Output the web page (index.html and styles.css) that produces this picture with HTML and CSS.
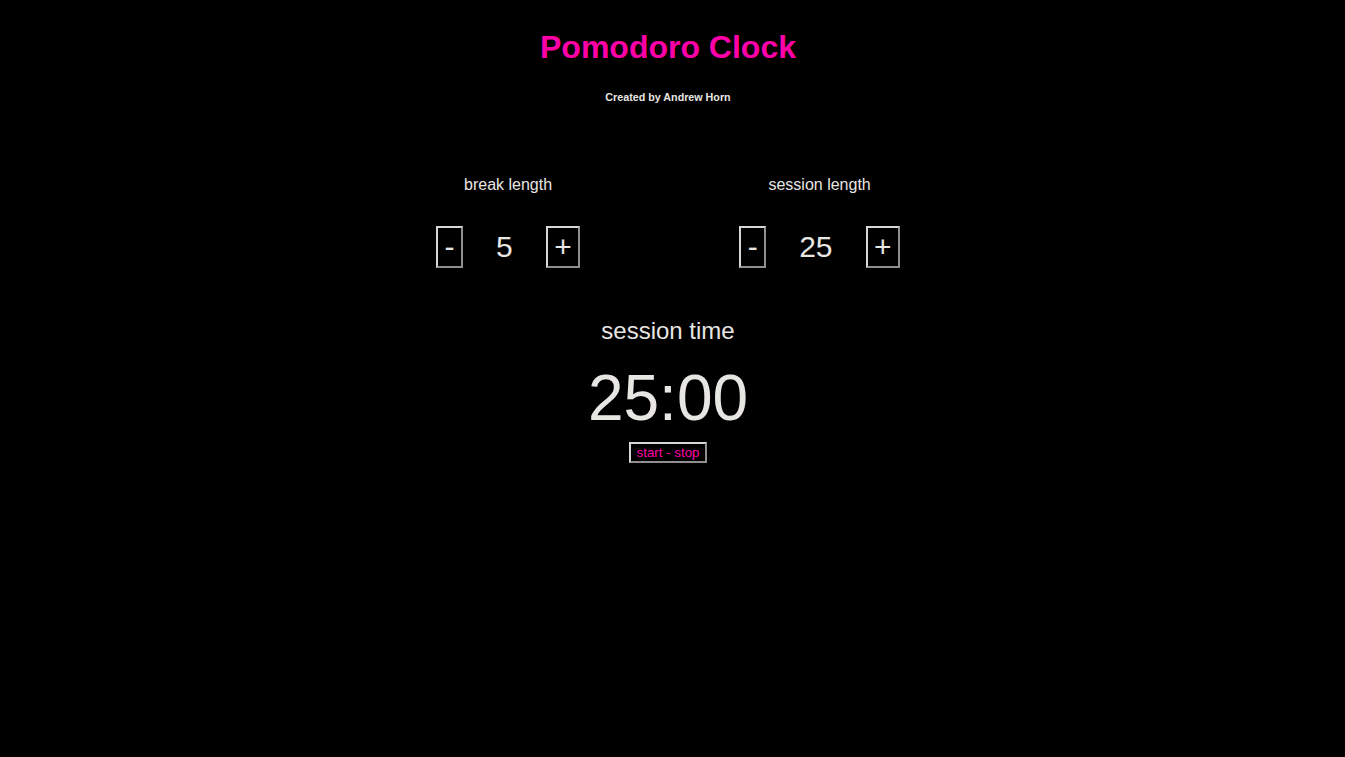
FILE: index.html
```html
<!DOCTYPE html>
<html>
<head>
<meta charset="utf-8">
<title>Pomodoro Clock</title>
<link rel="stylesheet" href="styles.css">
</head>
<body>
<h1 class="title">Pomodoro Clock</h1>
<h6 class="byline">Created by Andrew Horn</h6>
<div class="settings">
  <div class="setting">
    <div class="label">break length</div>
    <div class="controls">
      <button class="btn">-</button>
      <span class="value">5</span>
      <button class="btn">+</button>
    </div>
  </div>
  <div class="setting">
    <div class="label">session length</div>
    <div class="controls">
      <button class="btn">-</button>
      <span class="value">25</span>
      <button class="btn">+</button>
    </div>
  </div>
</div>
<div class="timer">
  <div class="timer-label">session time</div>
  <div class="timer-value">25:00</div>
  <button class="start">start - stop</button>
</div>
</body>
</html>
```
FILE: styles.css
```css
html, body {
  background: #000;
}
body {
  margin: 8px 17px 8px 8px;
  font-family: "Liberation Sans", Arial, sans-serif;
  color: #e8e6e3;
  text-align: center;
}
.title {
  font-size: 32px;
  font-weight: bold;
  color: #ff00a8;
  margin: 21.44px 0;
}
.byline {
  font-size: 10.72px;
  font-weight: bold;
  margin: 25px 0 0;
}
.settings {
  display: flex;
  justify-content: center;
  gap: 159px;
  margin-top: 73px;
}
.setting {
  display: flex;
  flex-direction: column;
  align-items: center;
}
.label {
  font-size: 16px;
  line-height: 18px;
}
.controls {
  display: flex;
  align-items: center;
  margin-top: 32px;
}
.btn {
  font-family: "Liberation Sans", Arial, sans-serif;
  font-size: 30px;
  line-height: 34px;
  padding: 2px 6.5px;
  background: #000;
  color: #e8e6e3;
  border: 2px solid;
  border-color: #d6d6d6 #8f8f8f #8f8f8f #d6d6d6;
  margin: 0;
}
.value {
  font-size: 30px;
  line-height: 34px;
  padding: 0 33px;
}
.timer {
  display: flex;
  flex-direction: column;
  align-items: center;
  margin-top: 49px;
}
.timer-label {
  font-size: 24px;
  line-height: 28px;
}
.timer-value {
  font-size: 64px;
  line-height: 74px;
  margin-top: 16px;
}
.start {
  font-family: "Liberation Sans", Arial, sans-serif;
  font-size: 13.33px;
  line-height: 15px;
  padding: 1px 6px;
  background: #000;
  color: #ff00a8;
  border: 2px solid;
  border-color: #d6d6d6 #8f8f8f #8f8f8f #d6d6d6;
  margin-top: 7px;
}
```
